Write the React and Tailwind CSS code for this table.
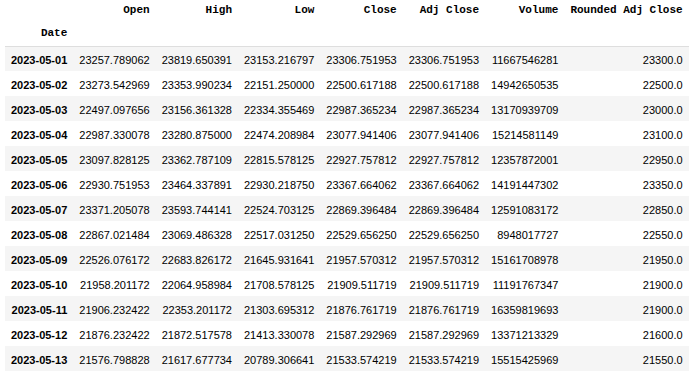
const cols = ["Open", "High", "Low", "Close", "Adj Close", "Volume", "Rounded Adj Close"];
const rows = [
  ["2023-05-01", "23257.789062", "23819.650391", "23153.216797", "23306.751953", "23306.751953", "11667546281", "23300.0"],
  ["2023-05-02", "23273.542969", "23353.990234", "22151.250000", "22500.617188", "22500.617188", "14942650535", "22500.0"],
  ["2023-05-03", "22497.097656", "23156.361328", "22334.355469", "22987.365234", "22987.365234", "13170939709", "23000.0"],
  ["2023-05-04", "22987.330078", "23280.875000", "22474.208984", "23077.941406", "23077.941406", "15214581149", "23100.0"],
  ["2023-05-05", "23097.828125", "23362.787109", "22815.578125", "22927.757812", "22927.757812", "12357872001", "22950.0"],
  ["2023-05-06", "22930.751953", "23464.337891", "22930.218750", "23367.664062", "23367.664062", "14191447302", "23350.0"],
  ["2023-05-07", "23371.205078", "23593.744141", "22524.703125", "22869.396484", "22869.396484", "12591083172", "22850.0"],
  ["2023-05-08", "22867.021484", "23069.486328", "22517.031250", "22529.656250", "22529.656250", "8948017727", "22550.0"],
  ["2023-05-09", "22526.076172", "22683.826172", "21645.931641", "21957.570312", "21957.570312", "15161708978", "21950.0"],
  ["2023-05-10", "21958.201172", "22064.958984", "21708.578125", "21909.511719", "21909.511719", "11191767347", "21900.0"],
  ["2023-05-11", "21906.232422", "22353.201172", "21303.695312", "21876.761719", "21876.761719", "16359819693", "21900.0"],
  ["2023-05-12", "21876.232422", "21872.517578", "21413.330078", "21587.292969", "21587.292969", "13371213329", "21600.0"],
  ["2023-05-13", "21576.798828", "21617.677734", "20789.306641", "21533.574219", "21533.574219", "15515425969", "21550.0"],
];

export default function App() {
  return (
    <div className="w-[700px] h-[377px] bg-white overflow-hidden pl-[5px]">
      <table className="border-collapse text-[11px] text-black font-['Liberation_Sans',Arial,sans-serif]">
        <thead className="border-b border-[#dedede]">
          <tr className="h-[21px]">
            <th className="px-[6px]"></th>
            {cols.map((c) => (
              <th
                key={c}
                className="px-[6px] text-right font-bold whitespace-pre leading-[13px] font-['Liberation_Mono',monospace]"
              >
                {c}
              </th>
            ))}
          </tr>
          <tr className="h-[25px]">
            <th className="px-[6px] text-right font-bold leading-[13px] font-['Liberation_Mono',monospace]">
              Date
            </th>
            {cols.map((c) => (
              <th key={c} className="px-[6px]"></th>
            ))}
          </tr>
        </thead>
        <tbody>
          {rows.map((r, i) => (
            <tr key={r[0]} className={i % 2 === 0 ? "h-[25px] bg-[#f5f5f5]" : "h-[25px] bg-white"}>
              <th className="px-[6px] pt-[4px] text-right font-bold leading-[13px] whitespace-nowrap">{r[0]}</th>
              {r.slice(1).map((v, j) => (
                <td key={j} className="px-[6px] pt-[4px] text-right leading-[13px] whitespace-nowrap">
                  {v}
                </td>
              ))}
            </tr>
          ))}
        </tbody>
      </table>
    </div>
  );
}
